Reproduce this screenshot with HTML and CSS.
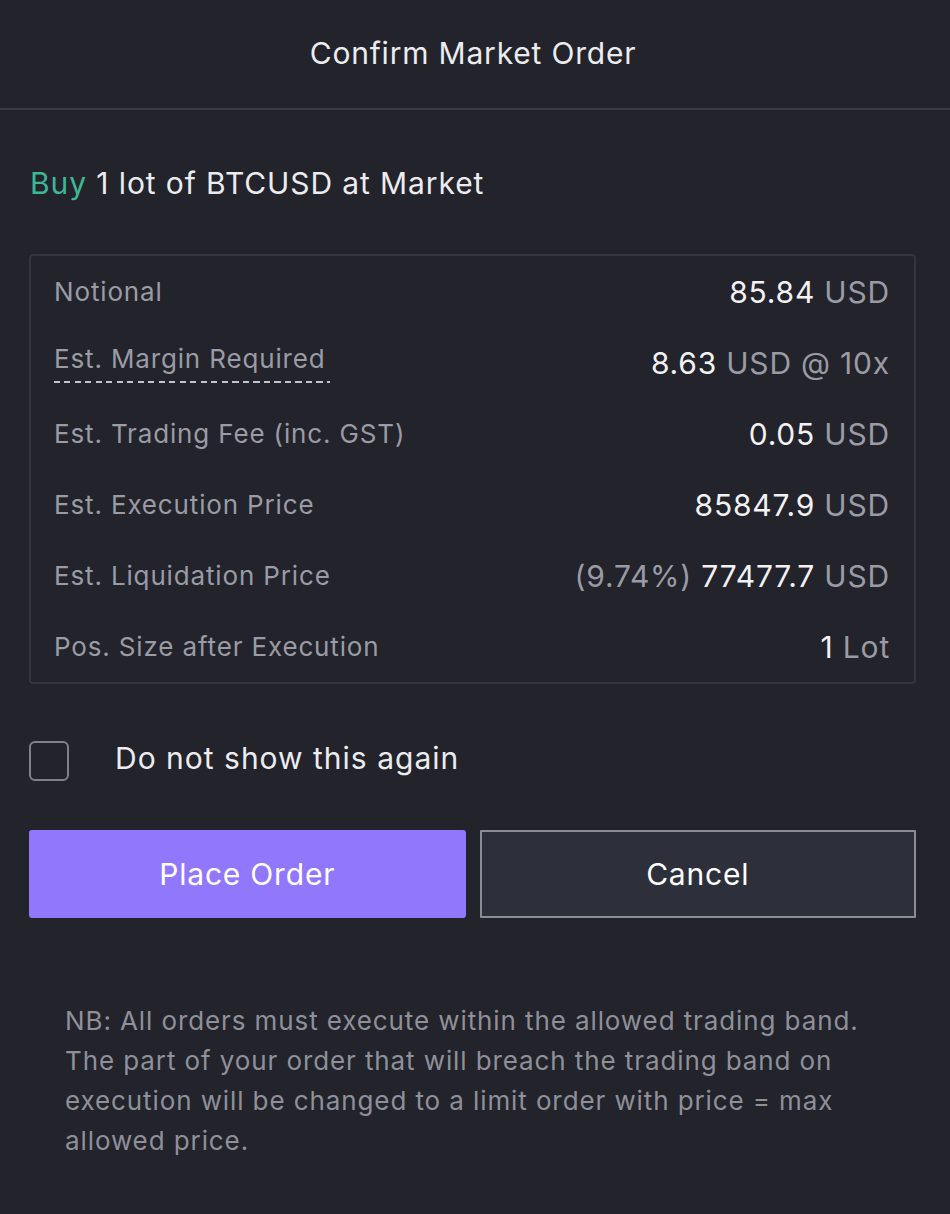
FILE: index.html
```html
<!DOCTYPE html>
<html lang="en">
<head>
<meta charset="utf-8">
<title>Confirm Market Order</title>
<link rel="stylesheet" href="styles.css">
</head>
<body>
<div class="modal">
  <header class="modal-header">Confirm Market Order</header>
  <main class="modal-body">
    <p class="summary"><span class="buy">Buy</span> 1 lot of BTCUSD at Market</p>
    <div class="details">
      <div class="row"><span class="label">Notional</span><span class="value"><b>85.84</b> USD</span></div>
      <div class="row"><span class="label dashed">Est. Margin Required</span><span class="value"><b>8.63</b> USD @ 10x</span></div>
      <div class="row"><span class="label">Est. Trading Fee (inc. GST)</span><span class="value"><b>0.05</b> USD</span></div>
      <div class="row"><span class="label">Est. Execution Price</span><span class="value"><b>85847.9</b> USD</span></div>
      <div class="row"><span class="label">Est. Liquidation Price</span><span class="value">(9.74%) <b>77477.7</b> USD</span></div>
      <div class="row"><span class="label">Pos. Size after Execution</span><span class="value"><b>1</b> Lot</span></div>
    </div>
    <label class="check">
      <span class="box"></span>
      <span class="check-text">Do not show this again</span>
    </label>
    <div class="actions">
      <button class="btn primary">Place Order</button>
      <button class="btn secondary">Cancel</button>
    </div>
    <p class="note">NB: All orders must execute within the allowed trading band. The part of your order that will breach the trading band on execution will be changed to a limit order with price = max allowed price.</p>
  </main>
</div>
</body>
</html>
```
FILE: styles.css
```css
* { box-sizing: border-box; }
html, body {
  margin: 0;
  padding: 0;
  background: #22232b;
  height: 100%;
}
body {
  font-family: Inter, "Noto Sans", "Liberation Sans", sans-serif;
  color: #e6e6ea;
}
.modal {
  width: 950px;
  min-height: 1214px;
  background: #22232b;
}
.modal-header {
  height: 110px;
  border-bottom: 2px solid #393a43;
  display: flex;
  align-items: center;
  justify-content: center;
  padding-bottom: 2px;
  padding-right: 4px;
  font-size: 30px;
  letter-spacing: 0.8px;
  color: #ececef;
}
.modal-body {
  padding: 55px 34px 0 29px;
}
.summary {
  margin: 0 0 53px 1px;
  font-size: 30px;
  line-height: 36px;
  letter-spacing: 0.9px;
  color: #ececef;
}
.buy { color: #3db795; }
.details {
  border: 2px solid #34363f;
  border-radius: 4px;
  padding: 0 24px 0 23px;
  display: flex;
  flex-direction: column;
}
.row {
  display: flex;
  justify-content: space-between;
  align-items: center;
  height: 71px;
}
.label {
  font-size: 26px;
  color: #9a9ba4;
  letter-spacing: 0.85px;
}
.label.dashed {
  padding-bottom: 9px;
  padding-right: 4px;
  margin-top: 0;
  background-image: repeating-linear-gradient(to right, #c4c5cb 0 6px, transparent 6px 10.5px);
  background-size: 100% 2px;
  background-position: left bottom;
  background-repeat: no-repeat;
}
.value {
  font-size: 30px;
  color: #9a9ba4;
  letter-spacing: 0.8px;
}
.value b {
  font-weight: 400;
  color: #f2f2f4;
}
.check {
  display: flex;
  align-items: center;
  margin-top: 57px;
  gap: 46px;
}
.box {
  width: 40px;
  height: 40px;
  border: 2px solid #7f8088;
  border-radius: 6px;
  flex: none;
}
.check-text {
  font-size: 30px;
  color: #ececef;
  letter-spacing: 1px;
  margin-top: -6px;
}
.actions {
  display: grid;
  grid-template-columns: 1fr 1fr;
  gap: 14px;
  margin-top: 49px;
}
.btn {
  height: 88px;
  font-family: inherit;
  font-size: 30px;
  letter-spacing: 0.8px;
  color: #ffffff;
  border-radius: 3px;
  cursor: pointer;
}
.btn.primary {
  background: #9177fc;
  border: none;
}
.btn.secondary {
  background: #2d2f3b;
  border: 2px solid #8b8d95;
  border-radius: 1px;
}
.note {
  margin: 83px 0 0 36px;
  font-size: 26px;
  line-height: 40px;
  color: #8f9099;
  letter-spacing: 0.9px;
  max-width: 820px;
}
```
